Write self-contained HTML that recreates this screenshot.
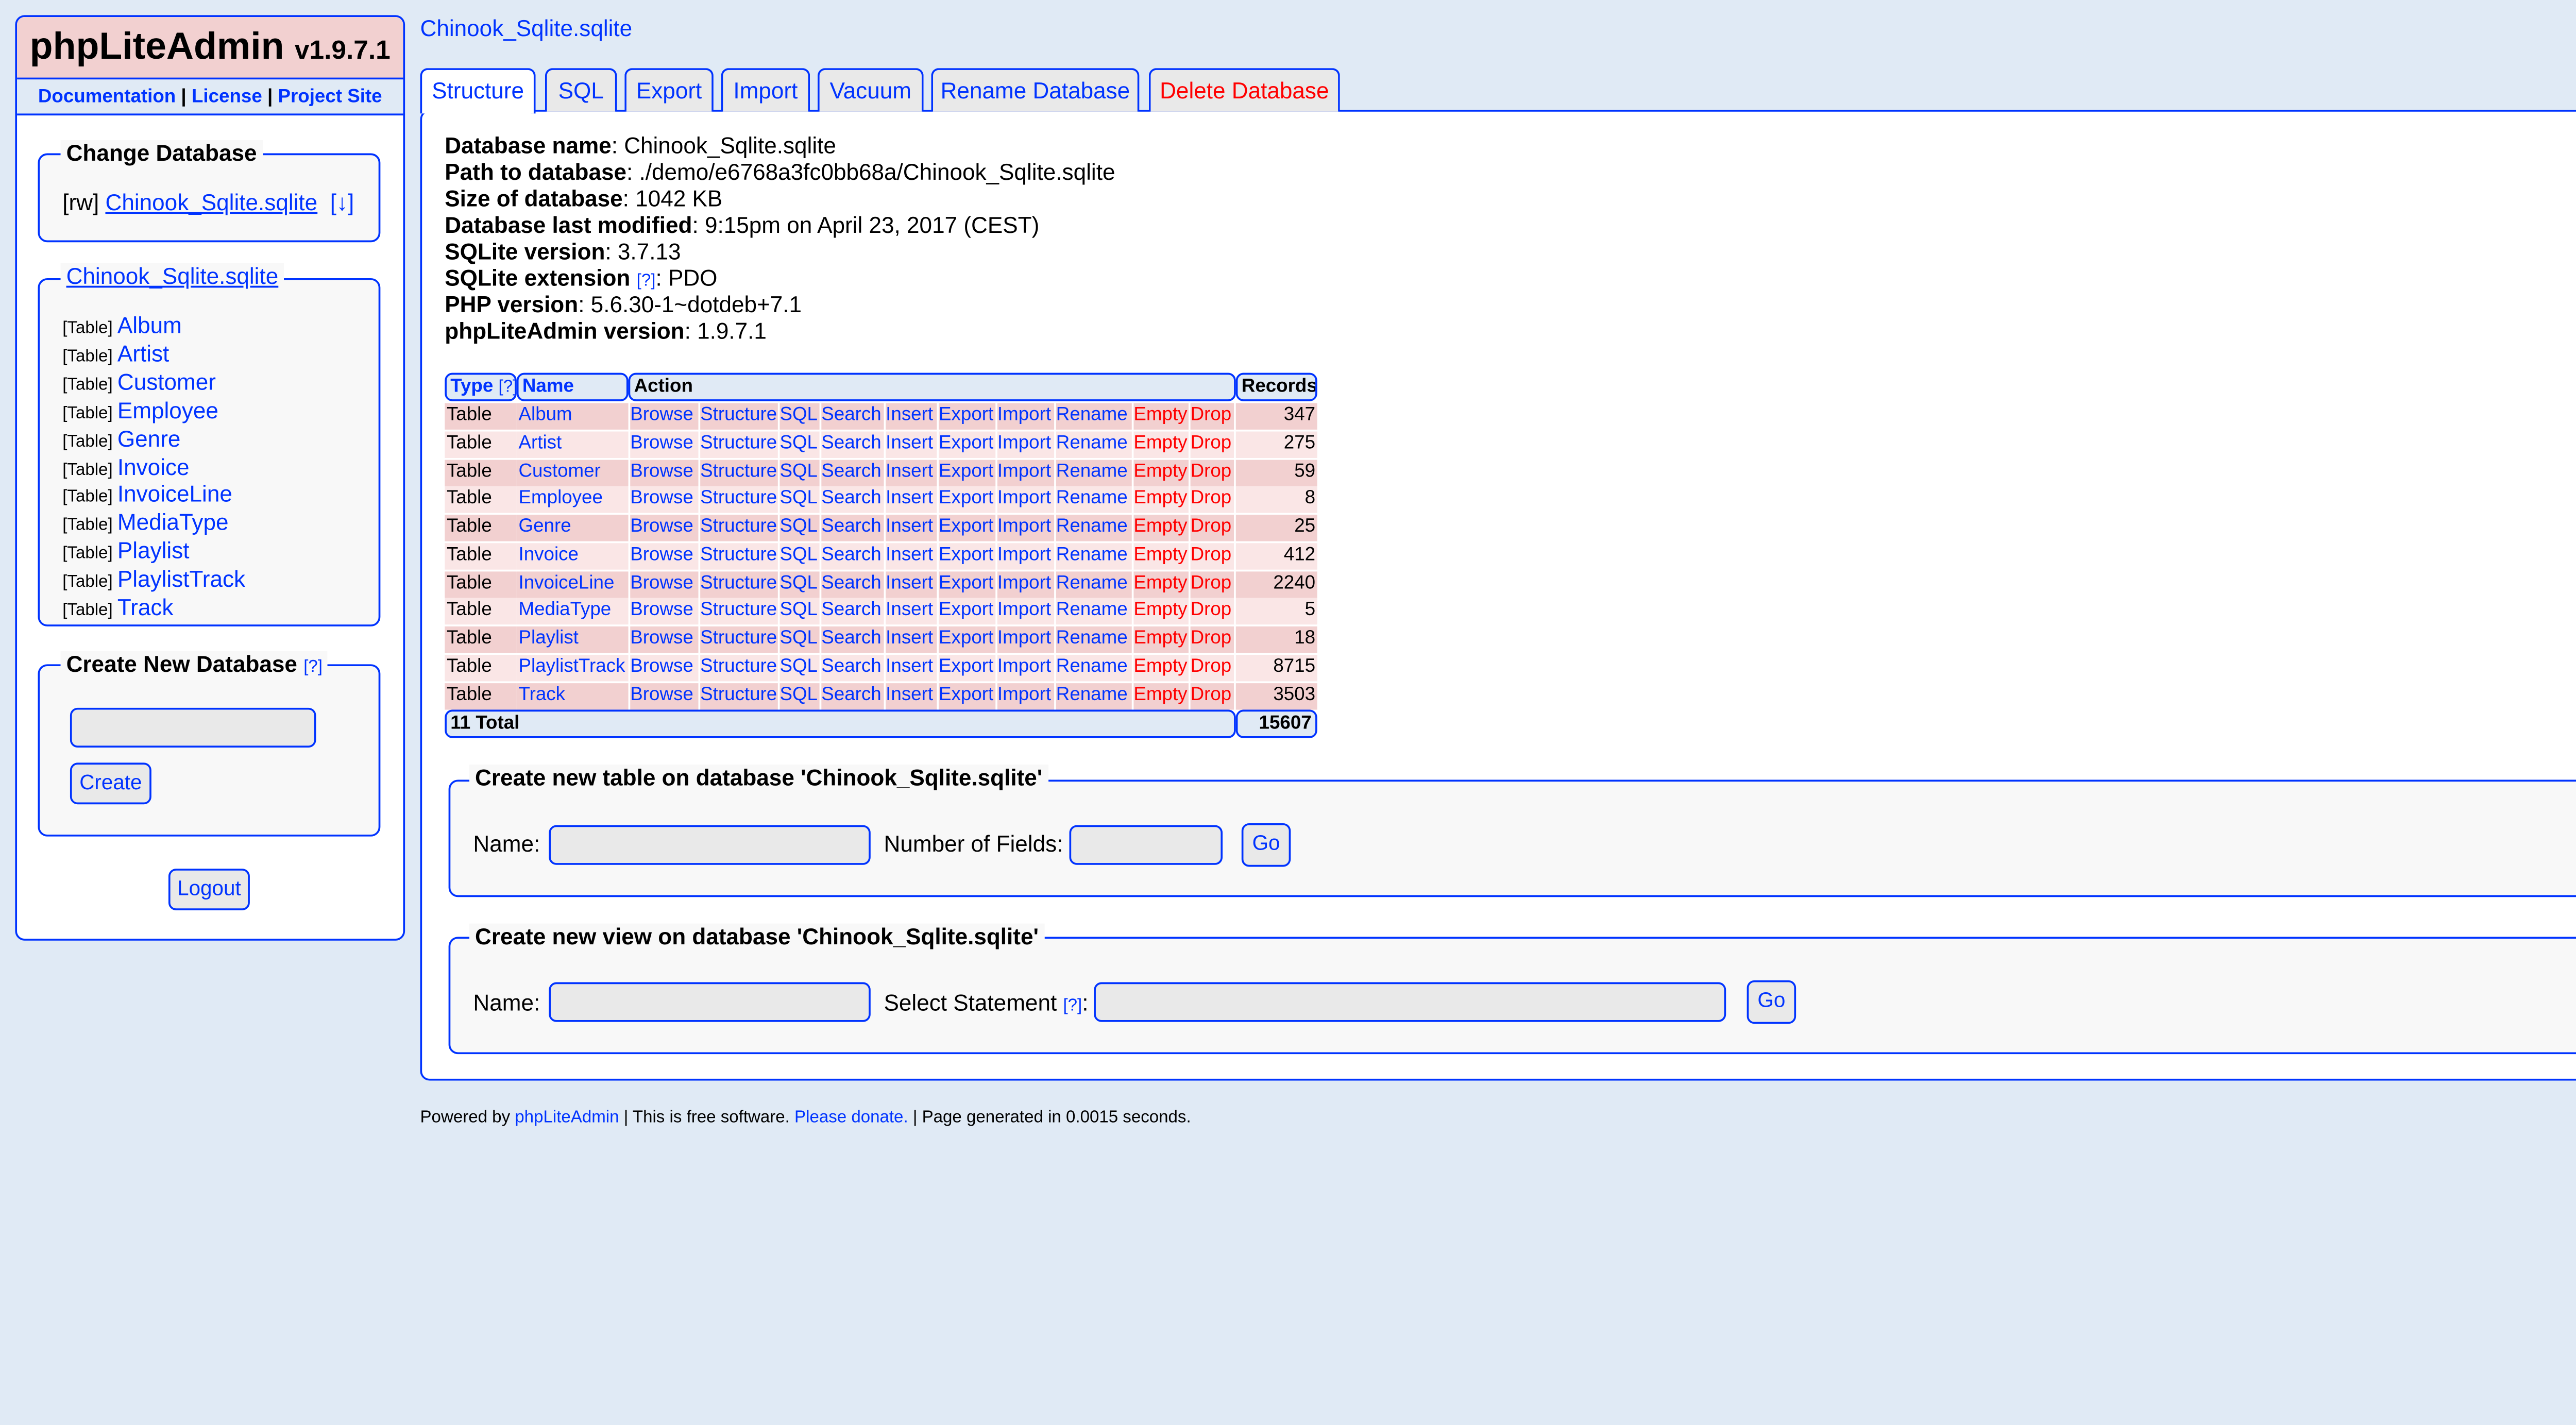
<!DOCTYPE html>
<html><head><meta charset="utf-8"><style>
html,body{margin:0;padding:0;background:#e0eaf5;width:5760px;height:2766px;overflow:hidden;}
#w{width:1568px;height:753px;position:absolute;left:0;top:0;transform:scale(3.67347);transform-origin:0 0;overflow:hidden;font-family:"Liberation Sans",Arial,sans-serif;color:#000;}
.a{position:absolute;}
a,.l{color:#0033ff;text-decoration:none;}
.box{position:absolute;border:1px solid #0033ff;border-radius:5px;box-sizing:border-box;}
.fs{position:absolute;border:1px solid #0033ff;border-radius:5px;background:#f8f8f8;box-sizing:border-box;}
.lg{position:absolute;background:#f8f8f8;font-weight:bold;padding:0 3px;white-space:nowrap;}
.inp{position:absolute;border:1px solid #0033ff;border-radius:4px;background:#e9e9e9;box-sizing:border-box;}
.btn{position:absolute;border:1px solid #0033ff;border-radius:4px;background:#e9e9e9;box-sizing:border-box;color:#0033ff;font-size:11px;text-align:center;}
.tab{position:absolute;top:36px;height:23px;border:1px solid #0033ff;border-bottom:none;border-radius:4px 4px 0 0;background:#e9e9e9;box-sizing:border-box;font-size:12px;color:#0033ff;text-align:center;line-height:23px;white-space:nowrap;}
.info{position:absolute;left:235px;font-size:12px;white-space:nowrap;}
.row{position:absolute;left:235px;width:461px;height:14px;font-size:10px;line-height:14px;}
.row div{position:absolute;top:0;height:14px;white-space:nowrap;overflow:hidden;}
.th{position:absolute;top:197px;height:15px;border:1px solid #0033ff;border-radius:4px;background:#e0eaf5;box-sizing:border-box;font-size:10px;font-weight:bold;line-height:13px;padding-left:2px;white-space:nowrap;overflow:hidden;}
</style></head><body><div id="w">

<div class="box" style="left:8px;top:8px;width:206px;height:489px;background:#fff;overflow:hidden;">
 <div class="a" style="left:0;top:0;width:204px;height:32px;background:#f2d0d0;border-bottom:1px solid #0033ff;text-align:center;line-height:33px;font-weight:bold;font-size:20px;">phpLiteAdmin <span style="font-size:14px;">v1.9.7.1</span></div>
 <div class="a" style="left:0;top:33px;width:204px;height:18px;background:#e0eaf5;border-bottom:1px solid #0033ff;text-align:center;line-height:19px;font-weight:bold;font-size:10px;"><a>Documentation</a> | <a>License</a> | <a>Project Site</a></div>
</div>
<div class="fs" style="left:20px;top:81px;width:181px;height:47px;"></div>
<div class="lg" style="left:32px;top:74px;font-size:12px;">Change Database</div>
<div class="a" style="left:33px;top:100px;font-size:12px;white-space:nowrap;">[rw] <a style="text-decoration:underline">Chinook_Sqlite.sqlite</a> &nbsp;<a>[↓]</a></div>

<div class="fs" style="left:20px;top:147px;width:181px;height:184px;"></div>
<div class="lg" style="left:32px;top:139px;font-size:12px;font-weight:normal;"><a style="text-decoration:underline">Chinook_Sqlite.sqlite</a></div>
<div class="a" style="left:33px;top:166px;font-size:9px;line-height:13.9px;white-space:nowrap;">
[Table] <a style="font-size:12px">Album</a><br>[Table] <a style="font-size:12px">Artist</a><br>[Table] <a style="font-size:12px">Customer</a><br>[Table] <a style="font-size:12px">Employee</a><br>[Table] <a style="font-size:12px">Genre</a><br>[Table] <a style="font-size:12px">Invoice</a><br>[Table] <a style="font-size:12px">InvoiceLine</a><br>[Table] <a style="font-size:12px">MediaType</a><br>[Table] <a style="font-size:12px">Playlist</a><br>[Table] <a style="font-size:12px">PlaylistTrack</a><br>[Table] <a style="font-size:12px">Track</a>
</div>

<div class="fs" style="left:20px;top:351px;width:181px;height:91px;"></div>
<div class="lg" style="left:32px;top:344px;font-size:12px;">Create New Database <span class="l" style="font-weight:normal;font-size:9px;">[?]</span></div>
<div class="inp" style="left:37px;top:374px;width:130px;height:21px;"></div>
<div class="btn" style="left:37px;top:403px;width:43px;height:22px;line-height:20px;">Create</div>
<div class="btn" style="left:89px;top:459px;width:43px;height:22px;line-height:20px;">Logout</div>

<div class="a" style="left:222px;top:8px;font-size:12px;color:#0033ff;">Chinook_Sqlite.sqlite</div>
<div class="box" style="left:222px;top:58px;width:1344px;height:513px;background:#fff;"></div>
<div class="tab" style="left:222px;width:61px;height:24px;background:#fff;">Structure</div>
<div class="tab" style="left:288px;width:38px;">SQL</div>
<div class="tab" style="left:330px;width:47px;">Export</div>
<div class="tab" style="left:381px;width:47px;">Import</div>
<div class="tab" style="left:432px;width:56px;">Vacuum</div>
<div class="tab" style="left:492px;width:110px;">Rename Database</div>
<div class="tab" style="left:607px;width:101px;color:#ff0000;">Delete Database</div>

<div class="info" style="top:70px;"><b>Database name</b>: Chinook_Sqlite.sqlite</div>
<div class="info" style="top:84px;"><b>Path to database</b>: ./demo/e6768a3fc0bb68a/Chinook_Sqlite.sqlite</div>
<div class="info" style="top:98px;"><b>Size of database</b>: 1042 KB</div>
<div class="info" style="top:112px;"><b>Database last modified</b>: 9:15pm on April 23, 2017 (CEST)</div>
<div class="info" style="top:126px;"><b>SQLite version</b>: 3.7.13</div>
<div class="info" style="top:140px;"><b>SQLite extension</b> <span class="l" style="font-size:9px">[?]</span>: PDO</div>
<div class="info" style="top:154px;"><b>PHP version</b>: 5.6.30-1~dotdeb+7.1</div>
<div class="info" style="top:168px;"><b>phpLiteAdmin version</b>: 1.9.7.1</div>

<div class="th" style="left:235px;width:38px;color:#0033ff;">Type <span style="font-weight:normal;font-size:9px">[?]</span></div>
<div class="th" style="left:273px;width:59px;color:#0033ff;">Name</div>
<div class="th" style="left:332px;width:321px;">Action</div>
<div class="th" style="left:653px;width:43px;">Records</div>

<div id="rows"></div>
<script>
var names=["Album","Artist","Customer","Employee","Genre","Invoice","InvoiceLine","MediaType","Playlist","PlaylistTrack","Track"];
var rec=[347,275,59,8,25,412,2240,5,18,8715,3503];
var acts=[["Browse",333,37],["Structure",370,42],["SQL",412,22],["Search",434,34],["Insert",468,28],["Export",496,31],["Import",527,31],["Rename",558,41],["Empty",599,30,1],["Drop",629,24,1]];
var h="";
for(var i=0;i<11;i++){
 var bg=i%2?"#fae6e6":"#f2d0d0";
 var t=213+i*14.75;
 h+='<div class="row" style="top:'+t+'px">';
 h+='<div style="left:0;width:37px;background:'+bg+';padding-left:1px">Table</div>';
 h+='<div style="left:38px;width:58px;background:'+bg+';padding-left:1px;color:#0033ff">'+names[i]+'</div>';
 for(var j=0;j<acts.length;j++){var a=acts[j];h+='<div style="left:'+(a[1]-235)+'px;width:'+(a[2]-1)+'px;background:'+bg+';color:'+(a[3]?'#ff0000':'#0033ff')+'">'+a[0]+'</div>';}
 h+='<div style="left:418px;width:42px;background:'+bg+';text-align:right;padding-right:1px">'+rec[i]+'</div>';
 h+='</div>';
}
document.getElementById("rows").innerHTML=h;
</script>
<div class="th" style="left:235px;top:375px;width:418px;color:#000;">11 Total</div>
<div class="th" style="left:653px;top:375px;width:43px;text-align:right;padding-right:2px;">15607</div>

<div class="fs" style="left:237px;top:412px;width:1315px;height:62px;"></div>
<div class="lg" style="left:248px;top:404px;font-size:12px;">Create new table on database 'Chinook_Sqlite.sqlite'</div>
<div class="a" style="left:250px;top:439px;font-size:12px;">Name:</div>
<div class="inp" style="left:290px;top:436px;width:170px;height:21px;"></div>
<div class="a" style="left:467px;top:439px;font-size:12px;">Number of Fields:</div>
<div class="inp" style="left:565px;top:436px;width:81px;height:21px;"></div>
<div class="btn" style="left:656px;top:435px;width:26px;height:23px;line-height:21px;">Go</div>

<div class="fs" style="left:237px;top:495px;width:1315px;height:62px;"></div>
<div class="lg" style="left:248px;top:488px;font-size:12px;">Create new view on database 'Chinook_Sqlite.sqlite'</div>
<div class="a" style="left:250px;top:523px;font-size:12px;">Name:</div>
<div class="inp" style="left:290px;top:519px;width:170px;height:21px;"></div>
<div class="a" style="left:467px;top:523px;font-size:12px;white-space:nowrap;">Select Statement <span class="l" style="font-size:9px">[?]</span>:</div>
<div class="inp" style="left:578px;top:519px;width:334px;height:21px;"></div>
<div class="btn" style="left:923px;top:518px;width:26px;height:23px;line-height:21px;">Go</div>

<div class="a" style="left:222px;top:585px;font-size:9px;white-space:nowrap;">Powered by <a>phpLiteAdmin</a> | This is free software. <a>Please donate.</a> | Page generated in 0.0015 seconds.</div>
</div></body></html>
